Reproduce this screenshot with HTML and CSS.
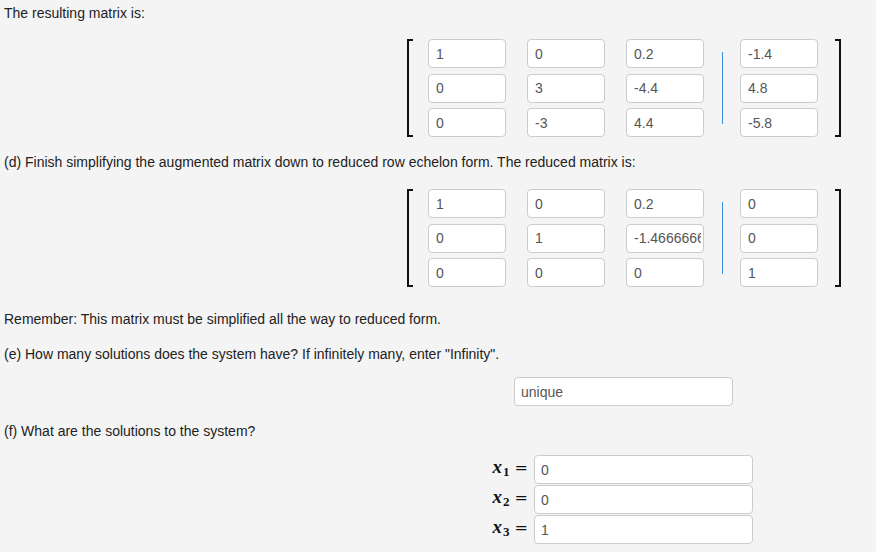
FILE: index.html
```html
<!DOCTYPE html>
<html>
<head>
<meta charset="utf-8">
<link rel="stylesheet" href="styles.css">
</head>
<body>
<div class="page">
  <p class="line">The resulting matrix is:</p>
  <div class="matrix m-first">
    <div class="bracket left"></div>
    <div class="col"><input class="cell" value="1"><input class="cell" value="0"><input class="cell" value="0"></div>
    <div class="col"><input class="cell" value="0"><input class="cell" value="3"><input class="cell" value="-3"></div>
    <div class="col"><input class="cell" value="0.2"><input class="cell" value="-4.4"><input class="cell" value="4.4"></div>
    <div class="divider"></div>
    <div class="col"><input class="cell" value="-1.4"><input class="cell" value="4.8"><input class="cell" value="-5.8"></div>
    <div class="bracket right"></div>
  </div>
  <p class="line l-d">(d) Finish simplifying the augmented matrix down to reduced row echelon form. The reduced matrix is:</p>
  <div class="matrix m-second">
    <div class="bracket left"></div>
    <div class="col"><input class="cell" value="1"><input class="cell" value="0"><input class="cell" value="0"></div>
    <div class="col"><input class="cell" value="0"><input class="cell" value="1"><input class="cell" value="0"></div>
    <div class="col"><input class="cell" value="0.2"><input class="cell" value="-1.46666666666667"><input class="cell" value="0"></div>
    <div class="divider"></div>
    <div class="col"><input class="cell" value="0"><input class="cell" value="0"><input class="cell" value="1"></div>
    <div class="bracket right"></div>
  </div>
  <p class="line l-rem">Remember: This matrix must be simplified all the way to reduced form.</p>
  <p class="line l-e">(e) How many solutions does the system have? If infinitely many, enter "Infinity".</p>
  <input class="answer unique" value="unique">
  <p class="line l-f">(f) What are the solutions to the system?</p>
  <div class="solutions">
    <div class="sol-row"><span class="label"><i>x</i><sub>1</sub><span class="eq">=</span></span><input class="answer" value="0"></div>
    <div class="sol-row"><span class="label"><i>x</i><sub>2</sub><span class="eq">=</span></span><input class="answer" value="0"></div>
    <div class="sol-row"><span class="label"><i>x</i><sub>3</sub><span class="eq">=</span></span><input class="answer" value="1"></div>
  </div>
</div>
</body>
</html>
```
FILE: styles.css
```css
html, body {
  margin: 0;
  background: #f4f4f4;
}
body {
  font-family: "Liberation Sans", Arial, sans-serif;
  font-size: 14px;
  line-height: 16px;
  color: #222;
}
.page {
  padding: 5px 4px;
}
.line {
  margin: 0;
  height: 16px;
  white-space: nowrap;
}
.matrix {
  display: flex;
  align-items: stretch;
  margin-left: 403px;
  height: 98px;
}
.m-first { margin-top: 18px; }
.m-second { margin-top: 19px; }
.l-d { margin-top: 17px; }
.l-rem { margin-top: 24px; }
.l-e { margin-top: 19px; }
.l-f { margin-top: 17px; }

.bracket {
  width: 6px;
  box-sizing: border-box;
  border-top: 2px solid #111;
  border-bottom: 2px solid #111;
}
.bracket.left {
  border-left: 2px solid #111;
  margin-right: 15px;
}
.bracket.right {
  border-right: 2px solid #111;
  margin-left: 17px;
}
.col {
  display: flex;
  flex-direction: column;
  justify-content: space-between;
  width: 78px;
  margin-right: 21px;
}
.col:nth-child(4) { margin-right: 18px; }
.col:nth-child(6) { margin-right: 0; }
.divider {
  align-self: center;
  width: 1px;
  height: 72px;
  background: #3b8fd8;
  margin-right: 17px;
}
.cell, .answer {
  box-sizing: border-box;
  height: 29px;
  border: 1px solid #ccc;
  border-radius: 4px;
  background: #fff;
  font-family: "Liberation Sans", Arial, sans-serif;
  font-size: 14px;
  color: #555;
  padding: 0 2px 0 7px;
  margin: 0;
  outline: none;
}
.cell {
  width: 78px;
}
.answer {
  display: block;
  width: 219px;
  padding-left: 6px;
}
.unique {
  margin-left: 510px;
  margin-top: 15px;
}
.solutions {
  margin-top: 16px;
  display: flex;
  flex-direction: column;
  gap: 1px;
}
.sol-row {
  display: flex;
  align-items: center;
  margin-left: 484px;
}
.label {
  width: 40px;
  margin-right: 6px;
  text-align: right;
  font-family: "DejaVu Serif", "Liberation Serif", serif;
  font-size: 16px;
  color: #111;
  white-space: nowrap;
}
.label i {
  font-family: "Liberation Serif", serif;
  font-style: italic;
  font-weight: bold;
  font-size: 19px;
}
.label sub {
  font-family: "Liberation Serif", serif;
  font-size: 13px;
  font-weight: bold;
  vertical-align: -3px;
  margin-left: 1px;
}
.eq {
  margin-left: 5px;
  font-size: 16px;
}
```
